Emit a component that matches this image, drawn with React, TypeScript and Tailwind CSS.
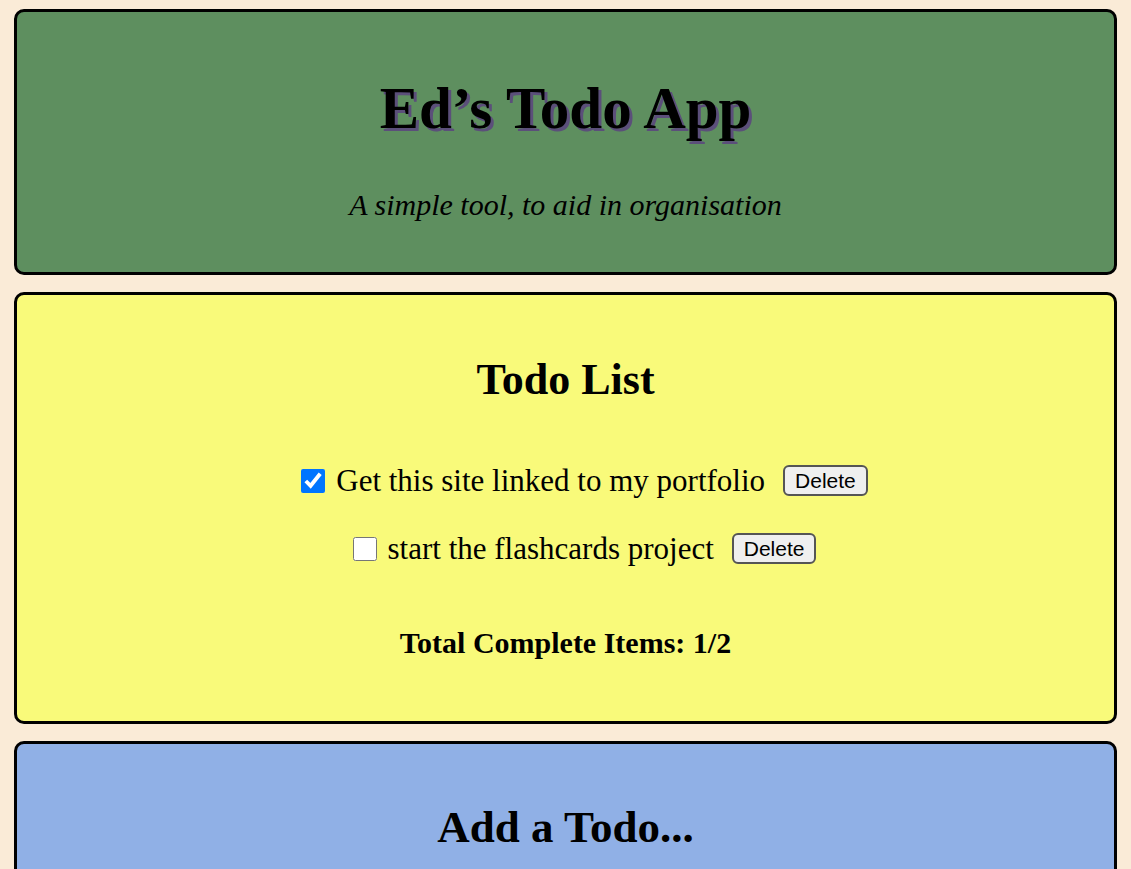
import { useState } from 'react';

type Todo = { id: number; text: string; done: boolean };

const serif = "font-['Liberation_Serif','Times_New_Roman',serif]";

export default function App() {
  const [todos, setTodos] = useState<Todo[]>([
    { id: 1, text: 'Get this site linked to my portfolio', done: true },
    { id: 2, text: 'start the flashcards project', done: false },
  ]);

  const complete = todos.filter((t) => t.done).length;

  return (
    <div className={`min-h-screen bg-[#faebd7] px-[14px] pt-[9px] flex flex-col gap-[17px] text-black ${serif}`}>
      {/* Header */}
      <header className="bg-[#5e8f5f] border-[3px] border-black rounded-[10px] flex flex-col items-center pt-[67px] pb-[52px]">
        <h1 className="text-[59px] leading-none font-bold [text-shadow:3px_3px_0_#5b4f7a]">Ed’s Todo App</h1>
        <p className="mt-[52px] text-[30px] leading-none italic">A simple tool, to aid in organisation</p>
      </header>

      {/* List */}
      <section className="bg-[#f9fa7a] border-[3px] border-black rounded-[10px] flex flex-col items-center pt-[63px] pb-[63px]">
        <h2 className="text-[44px] leading-none font-bold">Todo List</h2>
        <ul className="mt-[63px] pl-[38px] flex flex-col items-center gap-[37px]">
          {todos.map((t) => (
            <li key={t.id} className="flex items-center">
              <input
                type="checkbox"
                checked={t.done}
                onChange={() =>
                  setTodos(todos.map((x) => (x.id === t.id ? { ...x, done: !x.done } : x)))
                }
                className="w-[24px] h-[24px] mr-[11px] accent-[#0075ff]"
              />
              <span className="text-[31px] leading-none">{t.text}</span>
              <button
                onClick={() => setTodos(todos.filter((x) => x.id !== t.id))}
                className="ml-[18px] px-[10px] h-[31px] text-[21px] leading-none font-['Liberation_Sans',Arial,sans-serif] bg-[#efefef] border-2 border-[#555] rounded-[6px]"
              >
                Delete
              </button>
            </li>
          ))}
        </ul>
        <p className="mt-[64px] text-[30px] leading-none font-bold">
          Total Complete Items: {complete}/{todos.length}
        </p>
      </section>

      {/* Add */}
      <section className="bg-[#90b0e6] border-[3px] border-black rounded-[10px] flex flex-col items-center pt-[61px] pb-[60px]">
        <h2 className="text-[45px] leading-none font-bold">Add a Todo...</h2>
      </section>
    </div>
  );
}
